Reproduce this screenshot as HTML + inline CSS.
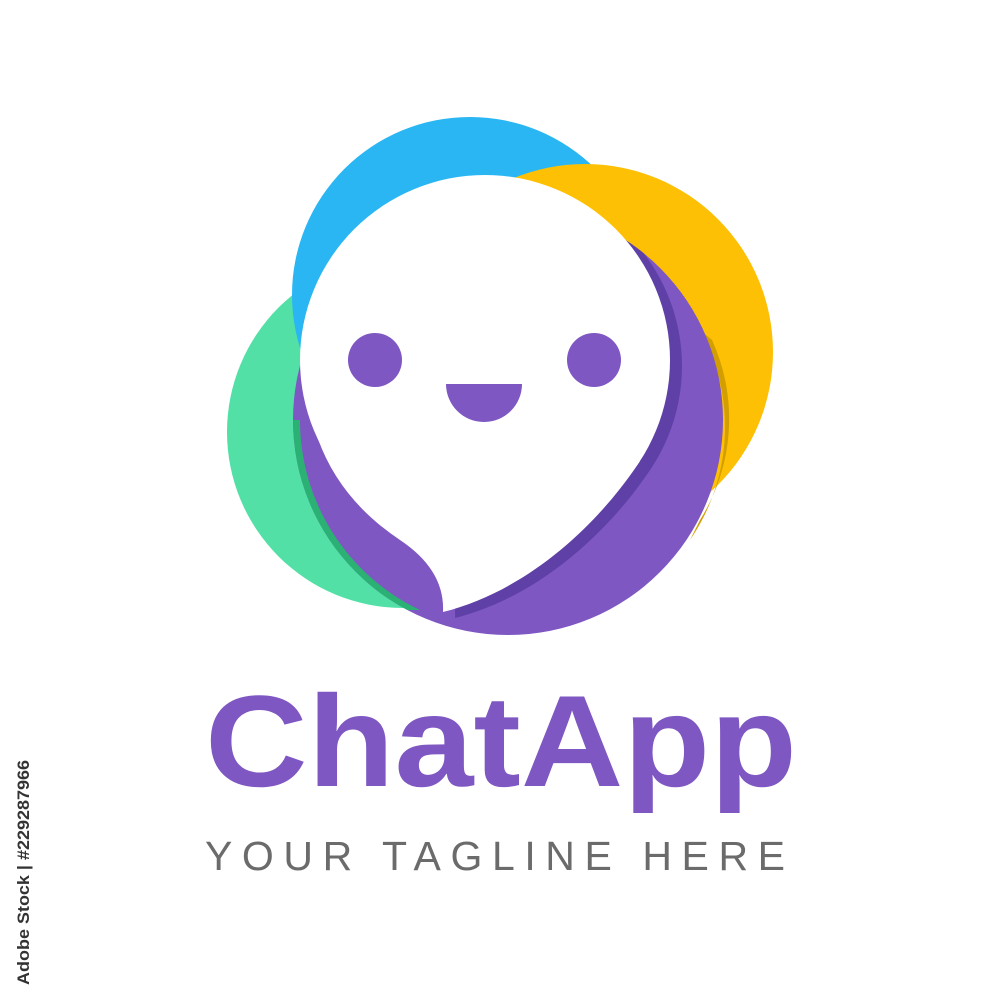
<!DOCTYPE html>
<html><head><style>
html,body{margin:0;padding:0;background:#fff;width:1000px;height:1000px;overflow:hidden}
svg{display:block}
</style></head><body>
<svg width="1000" height="1000" viewBox="0 0 1000 1000" xmlns="http://www.w3.org/2000/svg">
<defs><clipPath id="pc"><circle cx="508" cy="420" r="215"/></clipPath></defs>
<circle cx="403" cy="432" r="176" fill="#52e0a6"/>
<circle cx="470" cy="295" r="178" fill="#29b6f3"/>
<circle cx="585" cy="352" r="188" fill="#fdc004"/>
<path d="M700 330 A200 200 0 0 1 690 540 L700 520 A190 190 0 0 0 712 340Z" fill="#d29e00"/>
<circle cx="508" cy="420" r="215" fill="#7e57c2"/>
<g clip-path="url(#pc)">
<path d="M293 420 A215 215 0 0 0 405 610 L420 610 A210 210 0 0 1 300 420Z" fill="#2bb173"/>
<g transform="translate(12,6)" fill="#5e40a6">
<circle cx="485" cy="360" r="185"/>
<path d="M318 439 Q340 500 400 540 Q445 570 443 612 C530 590 600 522 640 461 L485 360 Z"/>
</g>
</g>
<g fill="#fff">
<circle cx="485" cy="360" r="185"/>
<path d="M318 439 Q340 500 400 540 Q445 570 443 612 C530 590 600 522 640 461 L485 360 Z"/>
</g>
<circle cx="375" cy="360" r="27" fill="#7e57c2"/>
<circle cx="594" cy="360" r="27" fill="#7e57c2"/>
<path d="M446 384 L522 384 A38 38 0 0 1 446 384Z" fill="#7e57c2"/>
<text x="205" y="786" font-family="Liberation Sans, sans-serif" font-weight="bold" font-size="130" fill="#7e57c2" textLength="592" lengthAdjust="spacingAndGlyphs">ChatApp</text>
<text x="205" y="870" font-family="Liberation Sans, sans-serif" font-size="41" fill="#6b6b6b" textLength="580" lengthAdjust="spacing">YOUR TAGLINE HERE</text>
<text transform="translate(29,985) rotate(-90)" font-family="Liberation Sans, sans-serif" font-weight="bold" font-size="17" fill="#333" textLength="225" lengthAdjust="spacingAndGlyphs">Adobe Stock | #229287966</text>
</svg>
</body></html>
